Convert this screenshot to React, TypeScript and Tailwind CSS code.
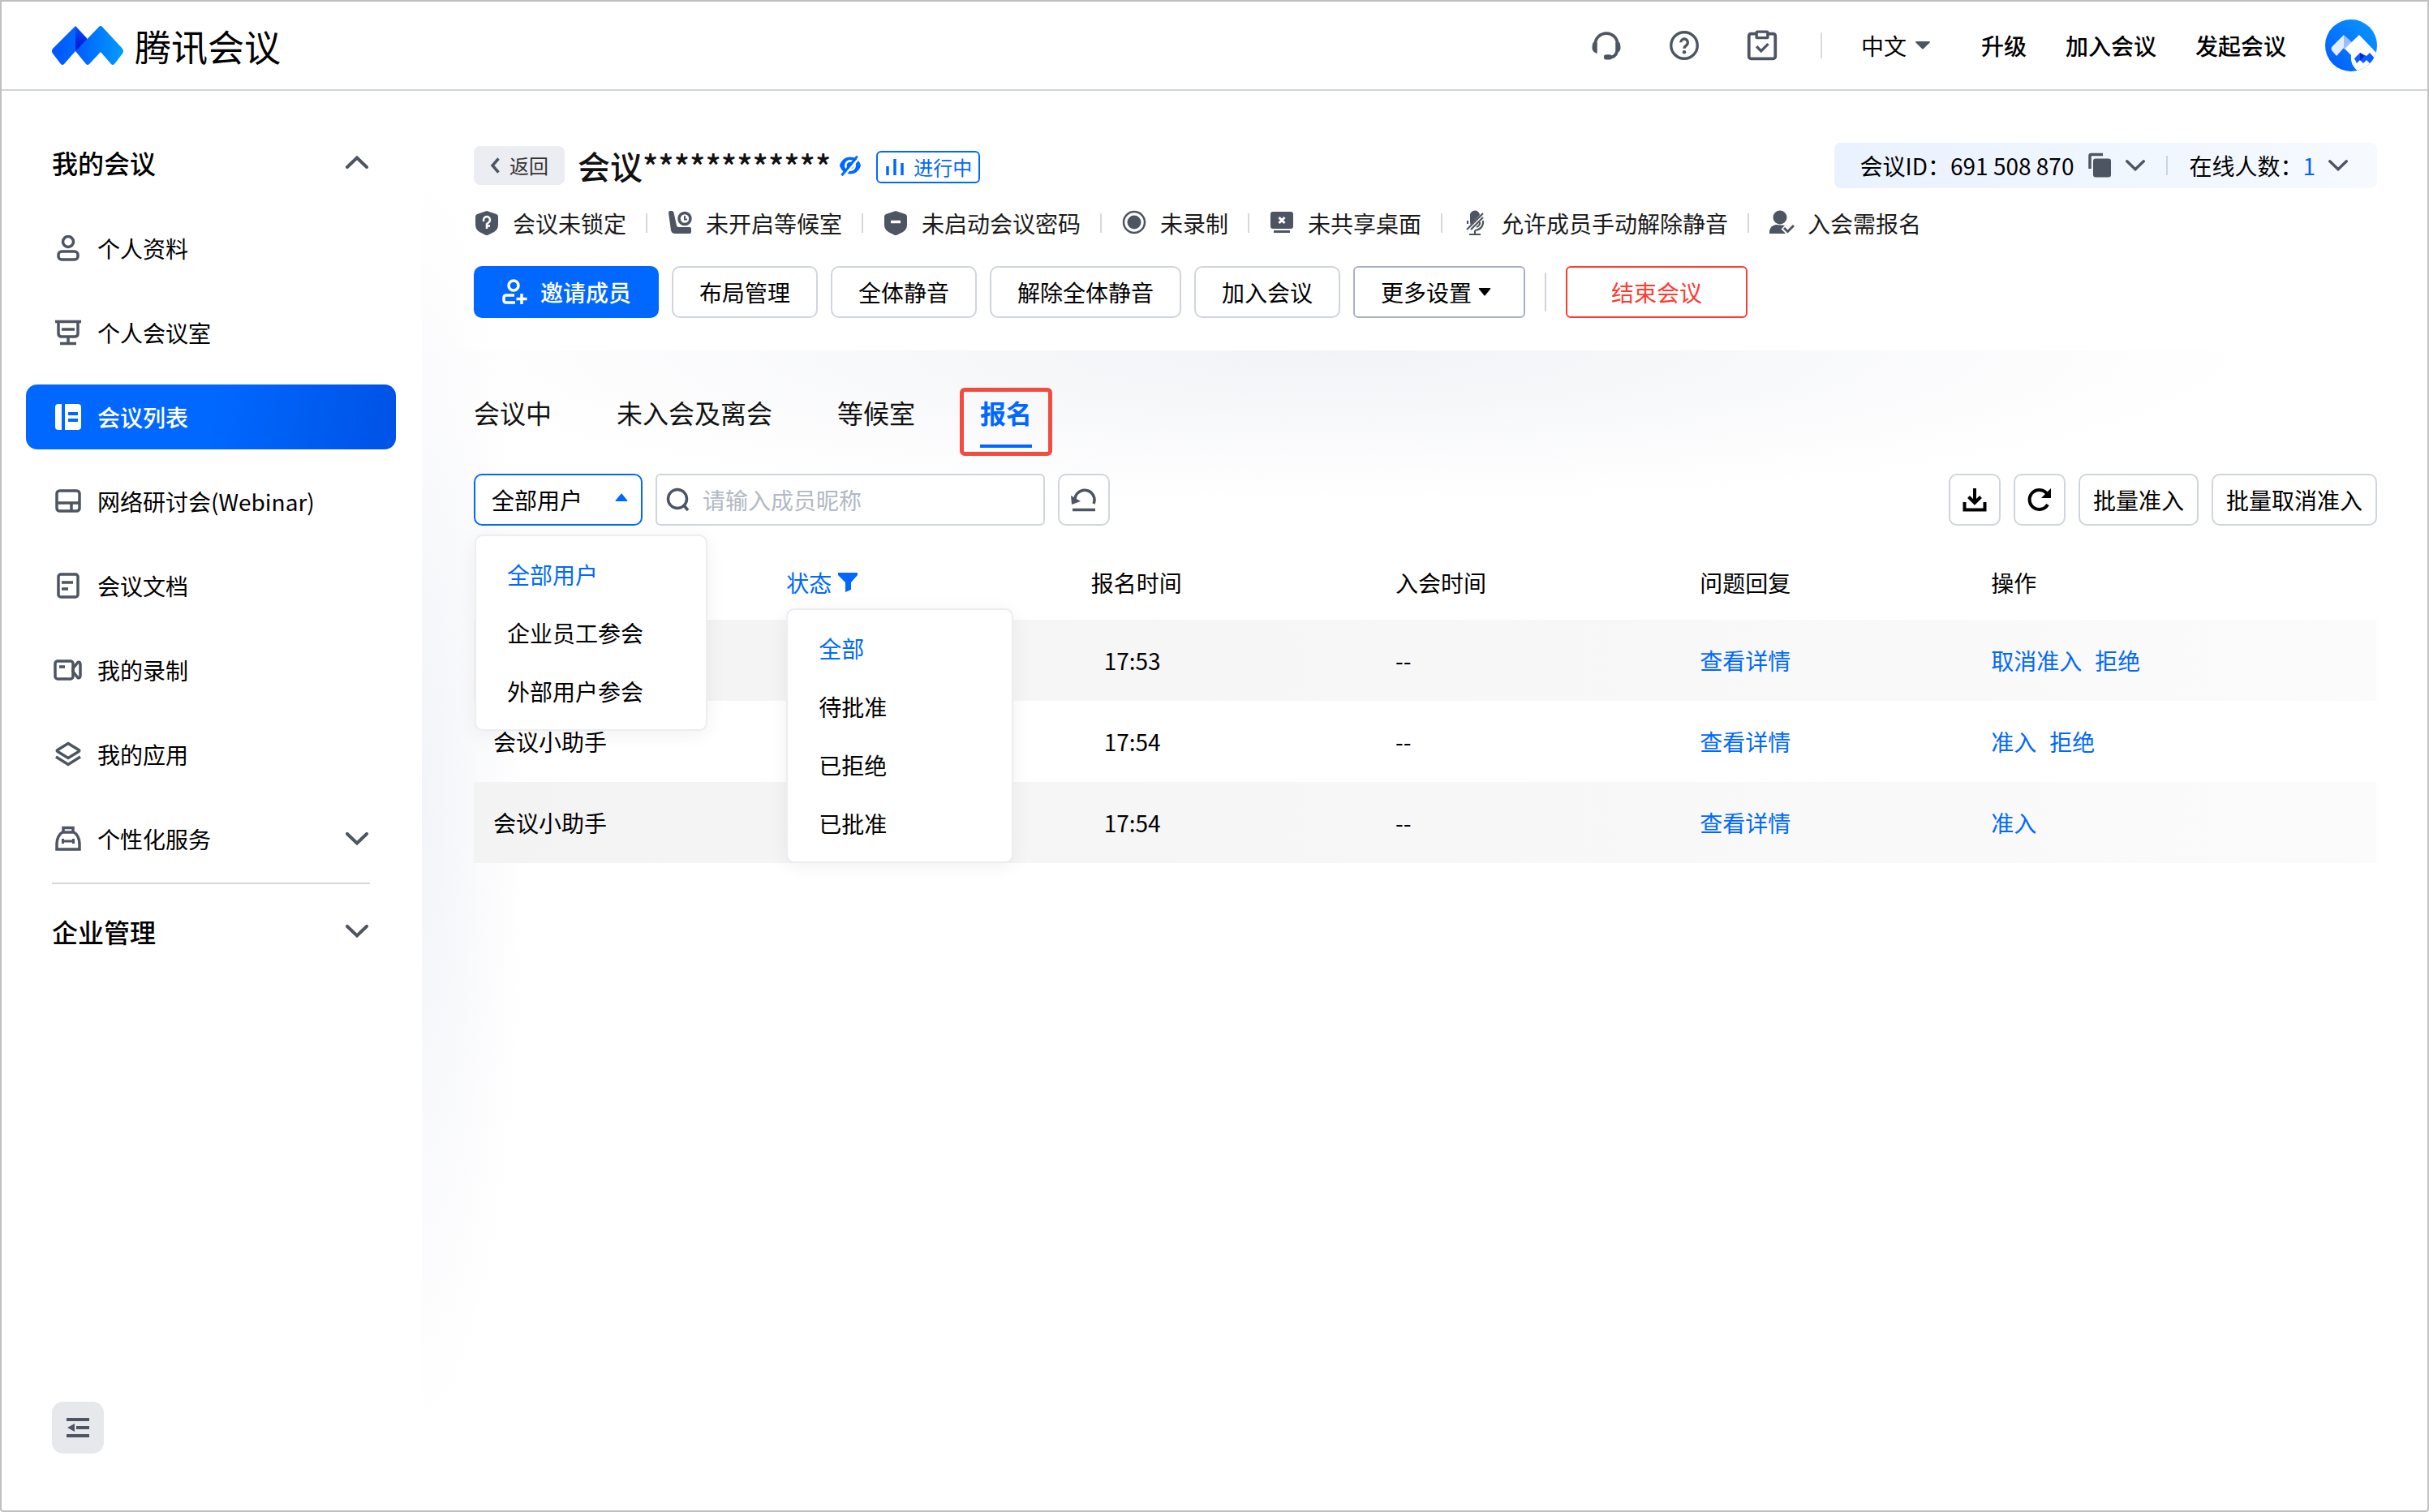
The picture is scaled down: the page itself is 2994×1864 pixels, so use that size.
import React from 'react';

type IconProps = { className?: string };

const Svg = ({ className = 'size-8', children }: { className?: string; children: React.ReactNode }) => (
    <svg
        viewBox="0 0 32 32"
        className={`shrink-0 ${className}`}
        fill="none"
        stroke="currentColor"
        strokeWidth="3.5"
        aria-hidden="true"
    >
        {children}
    </svg>
);

/* ---------- Logo and avatar ---------- */

const Logo = () => (
    <svg viewBox="0 0 88 48" className="h-12 w-[88px] shrink-0" aria-hidden="true">
        <defs>
            <linearGradient id="logo-left" x1="0" y1="0" x2="1" y2="0">
                <stop offset="0" stopColor="#0055ff" />
                <stop offset="1" stopColor="#0068ff" />
            </linearGradient>
            <linearGradient id="logo-right" x1="0" y1="0" x2="1" y2="0">
                <stop offset="0" stopColor="#005cff" />
                <stop offset="1" stopColor="#009cff" />
            </linearGradient>
            <linearGradient id="logo-fold" x1="0" y1="0" x2="0" y2="1">
                <stop offset="0" stopColor="#0a50ff" />
                <stop offset="1" stopColor="#0010c8" />
            </linearGradient>
        </defs>
        <path d="M29 0l14 15v6L29 31z" fill="url(#logo-fold)" />
        <path d="M29 0L1 28q-2 3 0 6l10 13q2 2 4 0l14-16z" fill="url(#logo-left)" />
        <path d="M58 1q2-2 4 0l25 27q2 3 0 6L77 47q-2 2-4 0L60 32 46 47q-2 2-4 0L29 31z" fill="url(#logo-right)" />
    </svg>
);

const Avatar = () => (
    <svg viewBox="0 0 64 64" className="size-16 shrink-0" aria-hidden="true">
        <defs>
            <clipPath id="avatar-clip">
                <circle cx="32" cy="32" r="32" />
            </clipPath>
            <linearGradient id="avatar-bg" x1="0" y1="1" x2="1" y2="0">
                <stop offset="0" stopColor="#0058ff" />
                <stop offset="1" stopColor="#0a9bff" />
            </linearGradient>
        </defs>
        <g clipPath="url(#avatar-clip)">
            <rect width="64" height="64" fill="url(#avatar-bg)" />
            <path d="M23 19L8 34q-1 2 0 4l6 7 9-10z" fill="#e3edff" />
            <path d="M23 19l10 9-10 9z" fill="#9dbdff" />
            <path d="M42 19L24 36l8 8c-1 8 2 15 9 20h23V42z" fill="#fff" />
            <path d="M43 41l-7 7 3 6 4-4 4 4 4-4 4 4 4 0 3-5-7-8-4 4z" fill="#0a5cff" />
            <path d="M43 41l5 4-5 6z" fill="#0020d8" />
        </g>
    </svg>
);

/* ---------- Header icons ---------- */

const HeadsetIcon = ({ className }: IconProps) => (
    <Svg className={className}>
        <path d="M5 17v-2a11 11 0 0 1 22 0v2" strokeWidth="3" />
        <path
            d="M3 13h4v11C4 23 2 21 2 18.500S2.500 14 3 13zM29 13h-4v11c3-1 5-3 5-5.500S29.500 14 29 13z"
            fill="currentColor"
            stroke="none"
        />
        <path d="M26.500 22c-1 4-4 6-8.500 6" strokeWidth="3" />
        <rect x="13.500" y="25" width="8" height="5" rx="2.500" fill="currentColor" stroke="none" />
    </Svg>
);

const HelpIcon = ({ className }: IconProps) => (
    <Svg className={className}>
        <circle cx="16" cy="16" r="13" strokeWidth="2.7" />
        <path d="M12.500 13a3.500 3.500 0 1 1 5.500 3c-1.300.9-2 1.500-2 3" strokeWidth="2.7" />
        <circle cx="16" cy="22.500" r="1.800" fill="currentColor" stroke="none" />
    </Svg>
);

const TaskIcon = ({ className }: IconProps) => (
    <Svg className={className}>
        <rect x="3" y="4.500" width="26" height="24.500" rx="2" strokeWidth="3" />
        <rect x="10.500" y="2.500" width="11" height="6" rx="1" fill="#fff" strokeWidth="2.700" />
        <path d="M10.500 17l4.500 4.500 7-7" strokeWidth="2.700" />
    </Svg>
);

const CaretDown = ({ className = 'h-2.5 w-5' }: IconProps) => (
    <svg viewBox="0 0 20 10" className={`shrink-0 ${className}`} fill="currentColor" preserveAspectRatio="none" aria-hidden="true">
        <path d="M2 0h16q2 0 .6 1.500L11 9q-1 1-2 0L1.400 1.500Q0 0 2 0z" />
    </svg>
);

const Chevron = ({ className = '' }: IconProps) => (
    <svg viewBox="0 0 28 16" className={`shrink-0 ${className}`} fill="none" stroke="#4e5562" strokeWidth="4" strokeLinecap="round" aria-hidden="true">
        <path d="M2 2l12 11.500L26 2" />
    </svg>
);

/* ---------- Sidebar icons ---------- */

const ProfileIcon = () => (
    <Svg>
        <circle cx="16" cy="8" r="6.500" />
        <rect x="4" y="20" width="24" height="10" rx="4" />
    </Svg>
);

const RoomIcon = () => (
    <Svg>
        <path d="M0 2.500h32M4 3v14q0 4 4 4h16q4 0 4-4V3M8 12h16M16 21v8M6 29.500h20" />
    </Svg>
);

const ListIcon = () => (
    <Svg>
        <path d="M4 0h4v32H4q-4 0-4-4V4q0-4 4-4z" fill="currentColor" stroke="none" />
        <path
            fillRule="evenodd"
            d="M12 0h16q4 0 4 4v24q0 4-4 4H12zM16 10v4h12v-4zM16 18v4h12v-4z"
            fill="currentColor"
            stroke="none"
        />
    </Svg>
);

const WebinarIcon = () => (
    <Svg>
        <rect x="2" y="3" width="28" height="25" rx="3.500" />
        <path d="M2 18h28M20 18v10" />
    </Svg>
);

const DocIcon = () => (
    <Svg>
        <rect x="4" y="2" width="24" height="28" rx="3" />
        <path d="M8 12h14M8 20h8" />
    </Svg>
);

const RecordingIcon = () => (
    <Svg className="h-8 w-9">
        <rect x="0" y="5" width="22" height="22" rx="3" />
        <path d="M5 12h7M22 14l6-7.500q3-1 3 3v13q0 4-3 3L22 18z" />
    </Svg>
);

const AppsIcon = () => (
    <Svg>
        <path d="M16 2.500L29 10.500q1.500 1 0 2L16 20.500 3 12.500q-1.500-1 0-2zM1 19l15 9.500L31 19" />
    </Svg>
);

const ServiceIcon = () => (
    <Svg>
        <path d="M10 8V2.500h12V8M9 8h14c4 2 7 8 7 14v7H2v-7C2 16 5 10 9 8z" />
        <path d="M8 19h16M9.500 16v6M22.500 16v6" strokeWidth="3" />
    </Svg>
);

/* ---------- Meeting status icons ---------- */

const shieldPath = 'M16 1l12 4q2 1 2 3v10q0 6-5 9l-7 3.500q-2 1-4 0L7 27q-5-3-5-9V8q0-2 2-3z';

const ShieldLockIcon = () => (
    <Svg>
        <path d={shieldPath} fill="currentColor" stroke="none" />
        <path d="M12 14v-2a4 4 0 1 1 6 3.500L16 17v6M16 19.500h4" stroke="#fff" strokeWidth="2.500" />
    </Svg>
);

const WaitingIcon = () => (
    <Svg>
        <path
            d="M2 3q0-2 2-2h2q2 0 2.500 2L12 19q.5 2 2.500 2H28q2 0 2 2v4q0 2-2 2H10q-4 0-5-4z"
            fill="currentColor"
            stroke="none"
        />
        <circle cx="22" cy="10.500" r="7" />
        <path d="M22 7v4.500h3" strokeWidth="2" />
    </Svg>
);

const ShieldMinusIcon = () => (
    <Svg>
        <path d={shieldPath} fill="currentColor" stroke="none" />
        <path d="M10 14.500h12" stroke="#fff" />
    </Svg>
);

const RecordIcon = () => (
    <Svg>
        <circle cx="16" cy="15" r="13" strokeWidth="2.500" />
        <circle cx="16" cy="15" r="8.500" fill="currentColor" stroke="none" />
    </Svg>
);

const ScreenOffIcon = () => (
    <Svg>
        <rect x="2" y="2" width="28" height="21" rx="3" fill="currentColor" stroke="none" />
        <path d="M12.500 9l7 7M19.500 9l-7 7" stroke="#fff" strokeWidth="3" />
        <path d="M6 26.500h20" strokeWidth="3" />
    </Svg>
);

const MicOffIcon = () => (
    <Svg>
        <path d="M10 14V7a6 6 0 0 1 12-1L11 18q-1-1-1-4z" fill="currentColor" stroke="none" />
        <path
            d="M6 24L26 4M11 24L26 9M22 15v2q-1 3-4 4M7 13v4M26 13v3q-1 8-10 9M16 25v5M9 30h14"
            strokeWidth="2.200"
        />
    </Svg>
);

const UserCheckIcon = () => (
    <Svg>
        <circle cx="14" cy="9" r="8.500" fill="currentColor" stroke="none" />
        <path d="M1 29v-3q1-7 8-8l12 1 1 10z" fill="currentColor" stroke="none" />
        <path d="M18 21l5 5 9-8" stroke="#fff" strokeWidth="7" />
        <path d="M19 22l4.500 4.500L31 19" strokeWidth="3" />
    </Svg>
);

/* ---------- Toolbar icons ---------- */

const InviteIcon = () => (
    <Svg>
        <circle cx="15" cy="8" r="6" />
        <path d="M16 20H6q-3 0-3 3v3q0 3 3 3h11M25 18v13M18.500 24.500h13" />
    </Svg>
);

const SearchIcon = () => (
    <Svg>
        <circle cx="15" cy="15" r="11.500" />
        <path d="M22 22l6 7" />
    </Svg>
);

const ResetIcon = () => (
    <Svg>
        <path d="M5 17a12 12 0 1 1 23 4" />
        <path d="M0 11l1 11 11-4z" fill="currentColor" stroke="none" />
        <path d="M2 28.500h28" />
    </Svg>
);

const DownloadIcon = () => (
    <Svg>
        <path d="M16 2v18M8.500 12.500L16 20l7.500-7.500M3.500 19v9.500h25V19" strokeWidth="4" />
    </Svg>
);

const RefreshIcon = () => (
    <Svg>
        <path d="M26 22A12 12 0 1 1 26 10" strokeWidth="4" />
        <path d="M30 2v12H18z" fill="currentColor" stroke="none" />
    </Svg>
);

const CopyIcon = () => (
    <Svg>
        <path d="M4 20V4q0-1.500 1.500-1.500H20" />
        <rect x="8" y="7.500" width="22" height="23" rx="3" fill="currentColor" stroke="none" />
    </Svg>
);

const HiddenEyeIcon = () => (
    <Svg className="size-7">
        <path d="M1 16C4 7 10 4 16 4s12 3 15 12c-3 9-9 12-15 12S4 25 1 16z" fill="currentColor" stroke="none" />
        <circle cx="16" cy="16" r="6.500" stroke="#fff" strokeWidth="3" />
        <path d="M7 31L29 5" stroke="#fff" strokeWidth="3" />
        <path d="M4 30L26 3" />
    </Svg>
);

const FunnelIcon = () => (
    <svg viewBox="0 0 24 24" className="size-6 shrink-0" fill="currentColor" aria-hidden="true">
        <path d="M0 0h24v3l-8 9v9l-7 3V12L0 3z" />
    </svg>
);

/* ---------- Data ---------- */

const menuItems = [
    { icon: ProfileIcon, label: '个人资料' },
    { icon: RoomIcon, label: '个人会议室' },
    { icon: ListIcon, label: '会议列表', active: true },
    { icon: WebinarIcon, label: '网络研讨会(Webinar)' },
    { icon: DocIcon, label: '会议文档' },
    { icon: RecordingIcon, label: '我的录制' },
    { icon: AppsIcon, label: '我的应用' },
    { icon: ServiceIcon, label: '个性化服务', expandable: true }
];

const statusItems = [
    { icon: ShieldLockIcon, label: '会议未锁定' },
    { icon: WaitingIcon, label: '未开启等候室' },
    { icon: ShieldMinusIcon, label: '未启动会议密码' },
    { icon: RecordIcon, label: '未录制' },
    { icon: ScreenOffIcon, label: '未共享桌面' },
    { icon: MicOffIcon, label: '允许成员手动解除静音' },
    { icon: UserCheckIcon, label: '入会需报名' }
];

const tabs = ['会议中', '未入会及离会', '等候室', '报名'];

const userOptions = ['全部用户', '企业员工参会', '外部用户参会'];

const statusOptions = ['全部', '待批准', '已拒绝', '已批准'];

const rows = [
    { name: '', time: '17:53', actions: ['取消准入', '拒绝'] },
    { name: '会议小助手', time: '17:54', actions: ['准入', '拒绝'] },
    { name: '会议小助手', time: '17:54', actions: ['准入'] }
];

/* ---------- Sections ---------- */

const Header = () => (
    <header className="flex h-[110px] items-center border-b-2 border-[#d0d5d9] bg-white px-[62px]">
        <a href="#" className="flex items-center gap-3.5 text-[45px] leading-none">
            <Logo />
            腾讯会议
        </a>
        <div className="ml-auto flex items-center gap-14 text-[#4e5562]">
            <button aria-label="客服"><HeadsetIcon className="size-10" /></button>
            <button aria-label="帮助"><HelpIcon className="size-10" /></button>
            <button aria-label="待办"><TaskIcon className="size-10" /></button>
        </div>
        <div className="ml-[52px] h-8 w-0.5 bg-[#d8dbe0]"></div>
        <nav className="ml-12 flex items-center gap-12 font-medium">
            <button className="mr-3.5 flex items-center gap-2.5 font-normal">
                中文
                <CaretDown className="h-2.5 w-5 text-[#4e5562]" />
            </button>
            <a href="#">升级</a>
            <a href="#">加入会议</a>
            <a href="#">发起会议</a>
            <button aria-label="账号"><Avatar /></button>
        </nav>
    </header>
);

const Sidebar = () => (
    <aside className="flex w-[518px] shrink-0 flex-col pt-14 pr-8 pb-[70px] pl-[30px]">
        <button className="flex h-16 items-center justify-between pr-[34px] pl-8 text-[32px] font-medium">
            我的会议
            <Chevron className="h-4 w-7 rotate-180" />
        </button>
        <nav className="mt-[34px] flex flex-col gap-6">
            {menuItems.map((item) => {
                const Icon = item.icon;
                return (
                    <a
                        key={item.label}
                        href="#"
                        className={`flex h-20 items-center rounded-[14px] pr-[34px] pl-9 ${
                            item.active ? 'bg-linear-100 from-[#0068ff] from-50% to-[#0052e5] font-medium text-white' : ''
                        }`}
                    >
                        <span className={`flex w-8 justify-center ${item.active ? '' : 'text-[#4e5562]'}`}>
                            <Icon />
                        </span>
                        <span className="ml-5">{item.label}</span>
                        {item.expandable && <Chevron className="ml-auto h-4 w-7" />}
                    </a>
                );
            })}
        </nav>
        <div className="mx-8 mt-3.5 h-0.5 bg-[#d5d7da]"></div>
        <button className="mt-[26px] flex h-16 items-center justify-between pr-[34px] pl-8 text-[32px] font-medium">
            企业管理
            <Chevron className="h-4 w-7" />
        </button>
        <button
            aria-label="收起菜单"
            className="mt-auto ml-8 flex size-16 items-center justify-center rounded-[14px] bg-[#e6e8ec] text-[#4e5562]"
        >
            <Svg>
                <path d="M2 6h28M14 16h16M2 26h28" strokeWidth="4" />
                <path d="M3 16l9-5v10z" fill="currentColor" stroke="none" />
            </Svg>
        </button>
    </aside>
);

const outlineButton = 'h-16 rounded-[10px] border-2 border-[#d0d5dd] bg-white';

const MeetingInfo = () => (
    <section className="pt-16 pr-[62px] pb-10 pl-16">
        <div className="flex h-14 items-center">
            <button className="flex h-12 items-center gap-3 rounded-lg bg-[#ecedf3] px-5 text-2xl text-[#333]">
                <svg viewBox="0 0 12 20" className="h-5 w-3" fill="none" stroke="#4e5562" strokeWidth="3.5" aria-hidden="true">
                    <path d="M10.500 1.500L3 10l7.500 8.500" />
                </svg>
                返回
            </button>
            <h1 className="ml-4 text-[40px] leading-none font-medium text-[#111]">会议************</h1>
            <button aria-label="显示会议名称" className="ml-2.5 text-[#0068ff]"><HiddenEyeIcon /></button>
            <span className="mt-1 ml-[18px] flex h-10 items-center gap-3 rounded-md border-2 border-[#0068ff] px-2 text-2xl text-[#0068ff]">
                <svg viewBox="0 0 24 20" className="h-5 w-6" stroke="currentColor" strokeWidth="3.5" aria-hidden="true">
                    <path d="M4 9v11M13 0v20M22 5v15" />
                </svg>
                进行中
            </span>
            <div className="ml-auto flex h-14 items-center rounded-lg bg-linear-to-r from-[#eaf2ff] to-[#f6faff] pr-9 pl-8">
                <span>会议ID：691 508 870</span>
                <button aria-label="复制会议ID" className="ml-4 text-[#4e5562]"><CopyIcon /></button>
                <button aria-label="会议详情" className="ml-4"><Chevron className="h-3.5 w-6" /></button>
                <div className="mx-[26px] h-6 w-0.5 bg-[#d0d5dd]"></div>
                <span>在线人数：<span className="text-[#0068ff]">1</span></span>
                <button aria-label="在线成员" className="ml-4"><Chevron className="h-3.5 w-6" /></button>
            </div>
        </div>

        <ul className="mt-[23px] flex h-10 items-center text-[#1a1a1a]">
            {statusItems.map((item, index) => {
                const Icon = item.icon;
                return (
                    <li key={item.label} className="flex items-center">
                        {index > 0 && <span className="mx-6 h-6 w-0.5 bg-[#d5d8de]"></span>}
                        <span className="text-[#4e5562]"><Icon /></span>
                        <span className="ml-4">{item.label}</span>
                    </li>
                );
            })}
        </ul>

        <div className="mt-[33px] flex items-center gap-4">
            <button className="flex h-16 items-center gap-4 rounded-[10px] bg-[#0068ff] px-[34px] font-medium text-white">
                <InviteIcon />
                邀请成员
            </button>
            <button className={`px-8 ${outlineButton}`}>布局管理</button>
            <button className={`px-8 ${outlineButton}`}>全体静音</button>
            <button className={`px-8 ${outlineButton}`}>解除全体静音</button>
            <button className={`px-8 ${outlineButton}`}>加入会议</button>
            <button className="flex h-16 items-center gap-2 rounded-md border-2 border-[#a9b0c4] bg-white pr-10 pl-8">
                更多设置
                <CaretDown className="h-2.5 w-4" />
            </button>
            <div className="mx-2 h-12 w-0.5 bg-[#d0d5dd]"></div>
            <button className="h-16 rounded-md border-2 border-[#ff3b30] bg-white px-[54px] text-[#ff3b30]">结束会议</button>
        </div>
    </section>
);

const OptionList = ({ options, className }: { options: string[]; className: string }) => (
    <ul
        className={`absolute z-10 rounded-[10px] border-2 border-[#ecedf1] bg-white py-[11px] shadow-[0_4px_24px_rgba(0,0,0,0.06)] ${className}`}
    >
        {options.map((option, index) => (
            <li key={option}>
                <button className={`h-[72px] w-full pl-[38px] text-left ${index === 0 ? 'text-[#0068ff]' : ''}`}>{option}</button>
            </li>
        ))}
    </ul>
);

const Registrations = () => (
    <section className="flex-1 bg-[radial-gradient(1150px_190px_at_45%_0,#f2f3f7,#f2f3f700)] pt-[46px] pr-[62px] pl-16">
        <div className="flex gap-20 text-[32px]" role="tablist">
            {tabs.map((tab) => {
                const active = tab === '报名';
                return (
                    <button
                        key={tab}
                        role="tab"
                        aria-selected={active}
                        className={`relative h-[84px] pt-1.5 pb-[30px] leading-[48px] ${active ? 'font-bold text-[#0068ff]' : 'text-[#111]'}`}
                    >
                        {tab}
                        {active && (
                            <>
                                <span className="absolute inset-x-0 bottom-2.5 h-1 bg-[#0068ff]"></span>
                                <span className="absolute -inset-x-[25px] inset-y-0 rounded-md border-[5px] border-[#f24b40]"></span>
                            </>
                        )}
                    </button>
                );
            })}
        </div>

        <div className="mt-[22px] flex items-center gap-4">
            <div className="relative">
                <select
                    aria-label="用户类型"
                    className="h-16 w-[208px] appearance-none rounded-[10px] border-2 border-[#0068ff] bg-white pl-5"
                >
                    {userOptions.map((option) => (
                        <option key={option}>{option}</option>
                    ))}
                </select>
                <CaretDown className="pointer-events-none absolute top-6 right-[18px] h-2.5 w-4 rotate-180 text-[#0068ff]" />
                <OptionList options={userOptions} className="top-[75px] left-px w-[287px]" />
            </div>
            <label className="flex h-16 w-[480px] items-center gap-3.5 rounded-md border-2 border-[#d0d5dd] bg-white pl-2.5 text-[#4e5562]">
                <SearchIcon />
                <input
                    type="text"
                    aria-label="搜索成员"
                    placeholder="请输入成员昵称"
                    className="w-full bg-transparent outline-none placeholder:text-[#b3b8c4]"
                />
            </label>
            <button aria-label="重置" className={`flex w-16 items-center justify-center text-[#4e5562] ${outlineButton}`}>
                <ResetIcon />
            </button>
            <button aria-label="下载" className={`ml-auto flex w-16 items-center justify-center ${outlineButton}`}>
                <DownloadIcon />
            </button>
            <button aria-label="刷新" className={`flex w-16 items-center justify-center ${outlineButton}`}>
                <RefreshIcon />
            </button>
            <button className={`px-4 ${outlineButton}`}>批量准入</button>
            <button className={`px-4 ${outlineButton}`}>批量取消准入</button>
        </div>

        <table className="mt-6 w-full table-fixed text-left">
            <thead>
                <tr className="h-[92px]">
                    <th className="w-[15.4%]" aria-label="用户"></th>
                    <th className="w-[16%] px-6 font-normal">
                        <div className="relative">
                            <button className="flex items-center gap-2 text-[#0068ff]">
                                状态
                                <FunnelIcon />
                            </button>
                            <OptionList options={statusOptions} className="top-[52px] left-0 w-[280px]" />
                        </div>
                    </th>
                    <th className="w-[16%] px-6 font-normal">报名时间</th>
                    <th className="w-[16%] px-6 font-normal">入会时间</th>
                    <th className="w-[15.3%] px-6 font-normal">问题回复</th>
                    <th className="px-6 font-normal">操作</th>
                </tr>
            </thead>
            <tbody>
                {rows.map((row, index) => (
                    <tr
                        key={index}
                        className="h-[100px] odd:bg-linear-to-r odd:from-[#f3f3f4] odd:to-[#fbfbfb]"
                    >
                        <td className="px-6">{row.name}</td>
                        <td></td>
                        <td className="pr-6 pl-10">{row.time}</td>
                        <td className="px-6">--</td>
                        <td className="px-6"><a href="#" className="text-[#0068ff]">查看详情</a></td>
                        <td className="px-6">
                            <div className="flex gap-4 text-[#0068ff]">
                                {row.actions.map((action) => (
                                    <button key={action}>{action}</button>
                                ))}
                            </div>
                        </td>
                    </tr>
                ))}
            </tbody>
        </table>
    </section>
);

export default function App() {
    return (
        <div
            lang="zh-CN"
            className="flex min-h-screen flex-col rounded-b-sm border-2 border-[#c0c0c0] bg-white font-['Noto_Sans_CJK_SC',sans-serif] text-[28px] leading-10 text-black"
        >
            <Header />
            <div className="flex flex-1">
                <Sidebar />
                <main className="flex flex-1 flex-col bg-[radial-gradient(130px_780px_at_0_50%,#f3f4f9,#f3f4f900)]">
                    <MeetingInfo />
                    <Registrations />
                </main>
            </div>
        </div>
    );
}
